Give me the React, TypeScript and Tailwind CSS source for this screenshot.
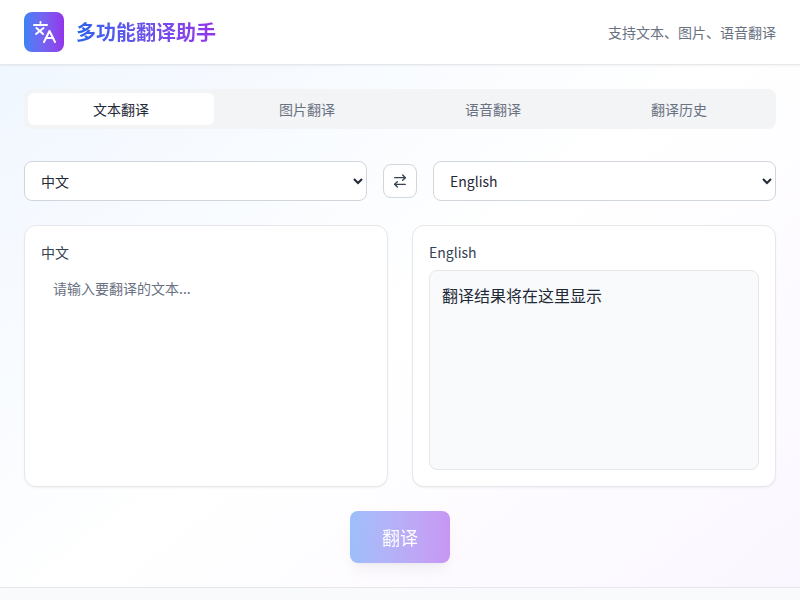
import React, { useState } from 'react';
import { ArrowRightLeft } from 'lucide-react';

const tabs = ['文本翻译', '图片翻译', '语音翻译', '翻译历史'];
const font = "font-['Noto_Sans_CJK_SC','Noto_Sans',sans-serif]";

const LogoIcon: React.FC = () => (
  <svg viewBox="0 0 24 24" className="w-6 h-6 text-white" fill="none" stroke="currentColor" strokeWidth="2" strokeLinecap="round" strokeLinejoin="round">
    <path d="M2 5h13" />
    <path d="M8.5 2v1" />
    <path d="M4.5 8 11 14" />
    <path d="M11.5 8 4 14" />
    <path d="m23 22-5.5-11L12 22" />
    <path d="M14 18h7" />
  </svg>
);

const App: React.FC = () => {
  const [active, setActive] = useState(0);

  return (
    <div className={`min-h-screen flex flex-col bg-gradient-to-br from-blue-50 via-white to-purple-50 ${font}`}>
      {/* шапка */}
      <header className="bg-white border-b border-gray-200 shadow-xs px-6 py-3 flex items-center justify-between">
        <div className="flex items-center gap-3">
          <div className="w-10 h-10 rounded-lg bg-gradient-to-r from-[#3b82f6] to-[#9333ea] flex items-center justify-center">
            <LogoIcon />
          </div>
          <h1 className="text-xl font-bold bg-gradient-to-r from-[#2563eb] to-[#9333ea] bg-clip-text text-transparent">多功能翻译助手</h1>
        </div>
        <span className="text-sm text-gray-500">支持文本、图片、语音翻译</span>
      </header>

      <main className="p-6 flex flex-col">
        <div className="grid grid-cols-4 h-10 p-1 bg-gray-100 rounded-lg mb-8">
          {tabs.map((tab, i) => (
            <button
              key={tab}
              onClick={() => setActive(i)}
              className={`text-sm rounded-md ${i === active ? 'bg-white text-[#1f2937]' : 'text-gray-500'}`}
            >
              {tab}
            </button>
          ))}
        </div>

        <div className="flex items-center gap-4 mb-6">
          <select className="flex-1 h-10 px-3 text-sm bg-white text-[#1f2937] border border-gray-300 rounded-lg">
            <option>中文</option>
            <option>English</option>
          </select>
          <button className="w-[34px] h-[34px] flex items-center justify-center bg-white border border-gray-300 rounded-lg text-gray-700">
            <ArrowRightLeft size={16} />
          </button>
          <select defaultValue="English" className="flex-1 h-10 px-3 text-sm bg-white text-[#1f2937] border border-gray-300 rounded-lg">
            <option>中文</option>
            <option>English</option>
          </select>
        </div>

        <div className="grid grid-cols-2 gap-6 mb-6">
          <div className="bg-white border border-gray-200 rounded-xl shadow-xs p-4 h-[262px] flex flex-col">
            <label className="text-sm text-gray-700 mb-2">中文</label>
            <textarea
              className="flex-1 resize-none outline-none text-sm px-3 py-2 placeholder:text-gray-500"
              placeholder="请输入要翻译的文本..."
            />
          </div>
          <div className="bg-white border border-gray-200 rounded-xl shadow-xs p-4 h-[262px] flex flex-col">
            <label className="text-sm text-gray-700 mb-2">English</label>
            <div className="flex-1 bg-gray-50 border border-gray-200 rounded-lg p-3 text-base text-[#1f2937]">翻译结果将在这里显示</div>
          </div>
        </div>

        <div className="flex justify-center">
          <button className="w-[100px] h-[52px] rounded-lg text-lg text-white shadow-lg bg-gradient-to-r from-[#3b82f6] to-[#9333ea] opacity-50">翻译</button>
        </div>
      </main>

      <footer className="bg-gray-50 border-t border-gray-200 h-[60px] flex items-center justify-center text-sm text-gray-500"></footer>
    </div>
  );
};

export default App;
